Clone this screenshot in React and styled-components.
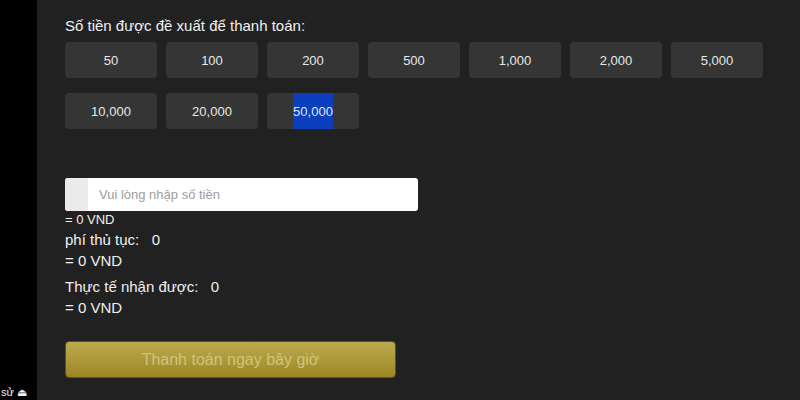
import React, { useState } from 'react';
import styled, { createGlobalStyle } from 'styled-components';

const GlobalStyle = createGlobalStyle`
  html, body {
    margin: 0;
    padding: 0;
    background: #212121;
  }
  body {
    font-family: "Liberation Sans", Arial, sans-serif;
  }
`;

const Page = styled.div`
  display: flex;
  width: 800px;
  height: 400px;
  overflow: hidden;
`;

const Sidebar = styled.div`
  width: 37px;
  flex-shrink: 0;
  background: #000;
  display: flex;
  flex-direction: column;
  justify-content: flex-end;
`;

const SideLabel = styled.div`
  white-space: nowrap;
  padding: 0 0 0 1px;
  font-size: 11px;
  line-height: 13px;
  margin-bottom: 1px;
  color: #f2f2f2;
`;

const Main = styled.div`
  flex: 1;
  background: #212121;
  padding: 17px 0 0 28px;
  display: flex;
  flex-direction: column;
  align-items: flex-start;
`;

const Title = styled.div`
  font-size: 15px;
  color: #f0f0f0;
  line-height: 18px;
  margin-bottom: 7px;
`;

const AmountGrid = styled.div`
  display: grid;
  grid-template-columns: repeat(7, 92px);
  column-gap: 9px;
  row-gap: 15px;
`;

const AmountButton = styled.button`
  height: 36px;
  border: none;
  border-radius: 4px;
  background: #353535;
  color: #e8e8e8;
  font-family: inherit;
  font-size: 13px;
  display: flex;
  align-items: center;
  justify-content: center;
  padding: 0;
  cursor: pointer;
`;

const Highlight = styled.span`
  display: flex;
  align-items: center;
  height: 100%;
  background: ${p => (p.$on ? '#0b3fbd' : 'transparent')};
  color: ${p => (p.$on ? '#dfe8ff' : 'inherit')};
`;

const InputBox = styled.div`
  margin-top: 49px;
  width: 353px;
  height: 33px;
  display: flex;
  background: #fff;
  border-radius: 3px;
  overflow: hidden;
`;

const InputAddon = styled.div`
  width: 23px;
  background: #ebebeb;
`;

const Input = styled.input`
  flex: 1;
  border: none;
  outline: none;
  padding: 0 0 0 11px;
  font-family: inherit;
  font-size: 13px;
  color: #333;
  background: transparent;
  &::placeholder {
    color: #9d9d9d;
  }
`;

const SmallNote = styled.div`
  font-size: 13px;
  color: #f0f0f0;
  line-height: 15px;
  margin-top: 1px;
  margin-bottom: 2px;
`;

const InfoGroup = styled.div`
  display: flex;
  flex-direction: column;
  margin-bottom: ${p => p.$gap || 0}px;
`;

const InfoLine = styled.div`
  font-size: 15px;
  color: #f0f0f0;
  line-height: 21px;
  white-space: pre;
`;

const PayButton = styled.button`
  margin-top: 23px;
  width: 331px;
  height: 37px;
  border: 1px solid #5f5316;
  border-radius: 4px;
  background: linear-gradient(to bottom, #b9aa4c 0%, #ab9838 55%, #9b8424 100%);
  color: #d0c47c;
  font-family: inherit;
  font-size: 16px;
  padding: 0;
  cursor: pointer;
`;

const amounts = ['50', '100', '200', '500', '1,000', '2,000', '5,000', '10,000', '20,000', '50,000'];

export default function App() {
  const [selected, setSelected] = useState('50,000');
  const [value, setValue] = useState('');

  return (
    <Page>
      <GlobalStyle />
      <Sidebar>
        <SideLabel>sử ⏏</SideLabel>
      </Sidebar>
      <Main>
        <Title>Số tiền được đề xuất để thanh toán:</Title>
        <AmountGrid>
          {amounts.map(a => (
            <AmountButton key={a} onClick={() => setSelected(a)}>
              <Highlight $on={selected === a}>{a}</Highlight>
            </AmountButton>
          ))}
        </AmountGrid>

        <InputBox>
          <InputAddon />
          <Input
            placeholder="Vui lòng nhập số tiền"
            value={value}
            onChange={e => setValue(e.target.value)}
          />
        </InputBox>
        <SmallNote>= 0 VND</SmallNote>

        <InfoGroup $gap={5}>
          <InfoLine>{'phí thủ tục:   0'}</InfoLine>
          <InfoLine>= 0 VND</InfoLine>
        </InfoGroup>
        <InfoGroup>
          <InfoLine>{'Thực tế nhận được:   0'}</InfoLine>
          <InfoLine>= 0 VND</InfoLine>
        </InfoGroup>

        <PayButton>Thanh toán ngay bây giờ</PayButton>
      </Main>
    </Page>
  );
}
